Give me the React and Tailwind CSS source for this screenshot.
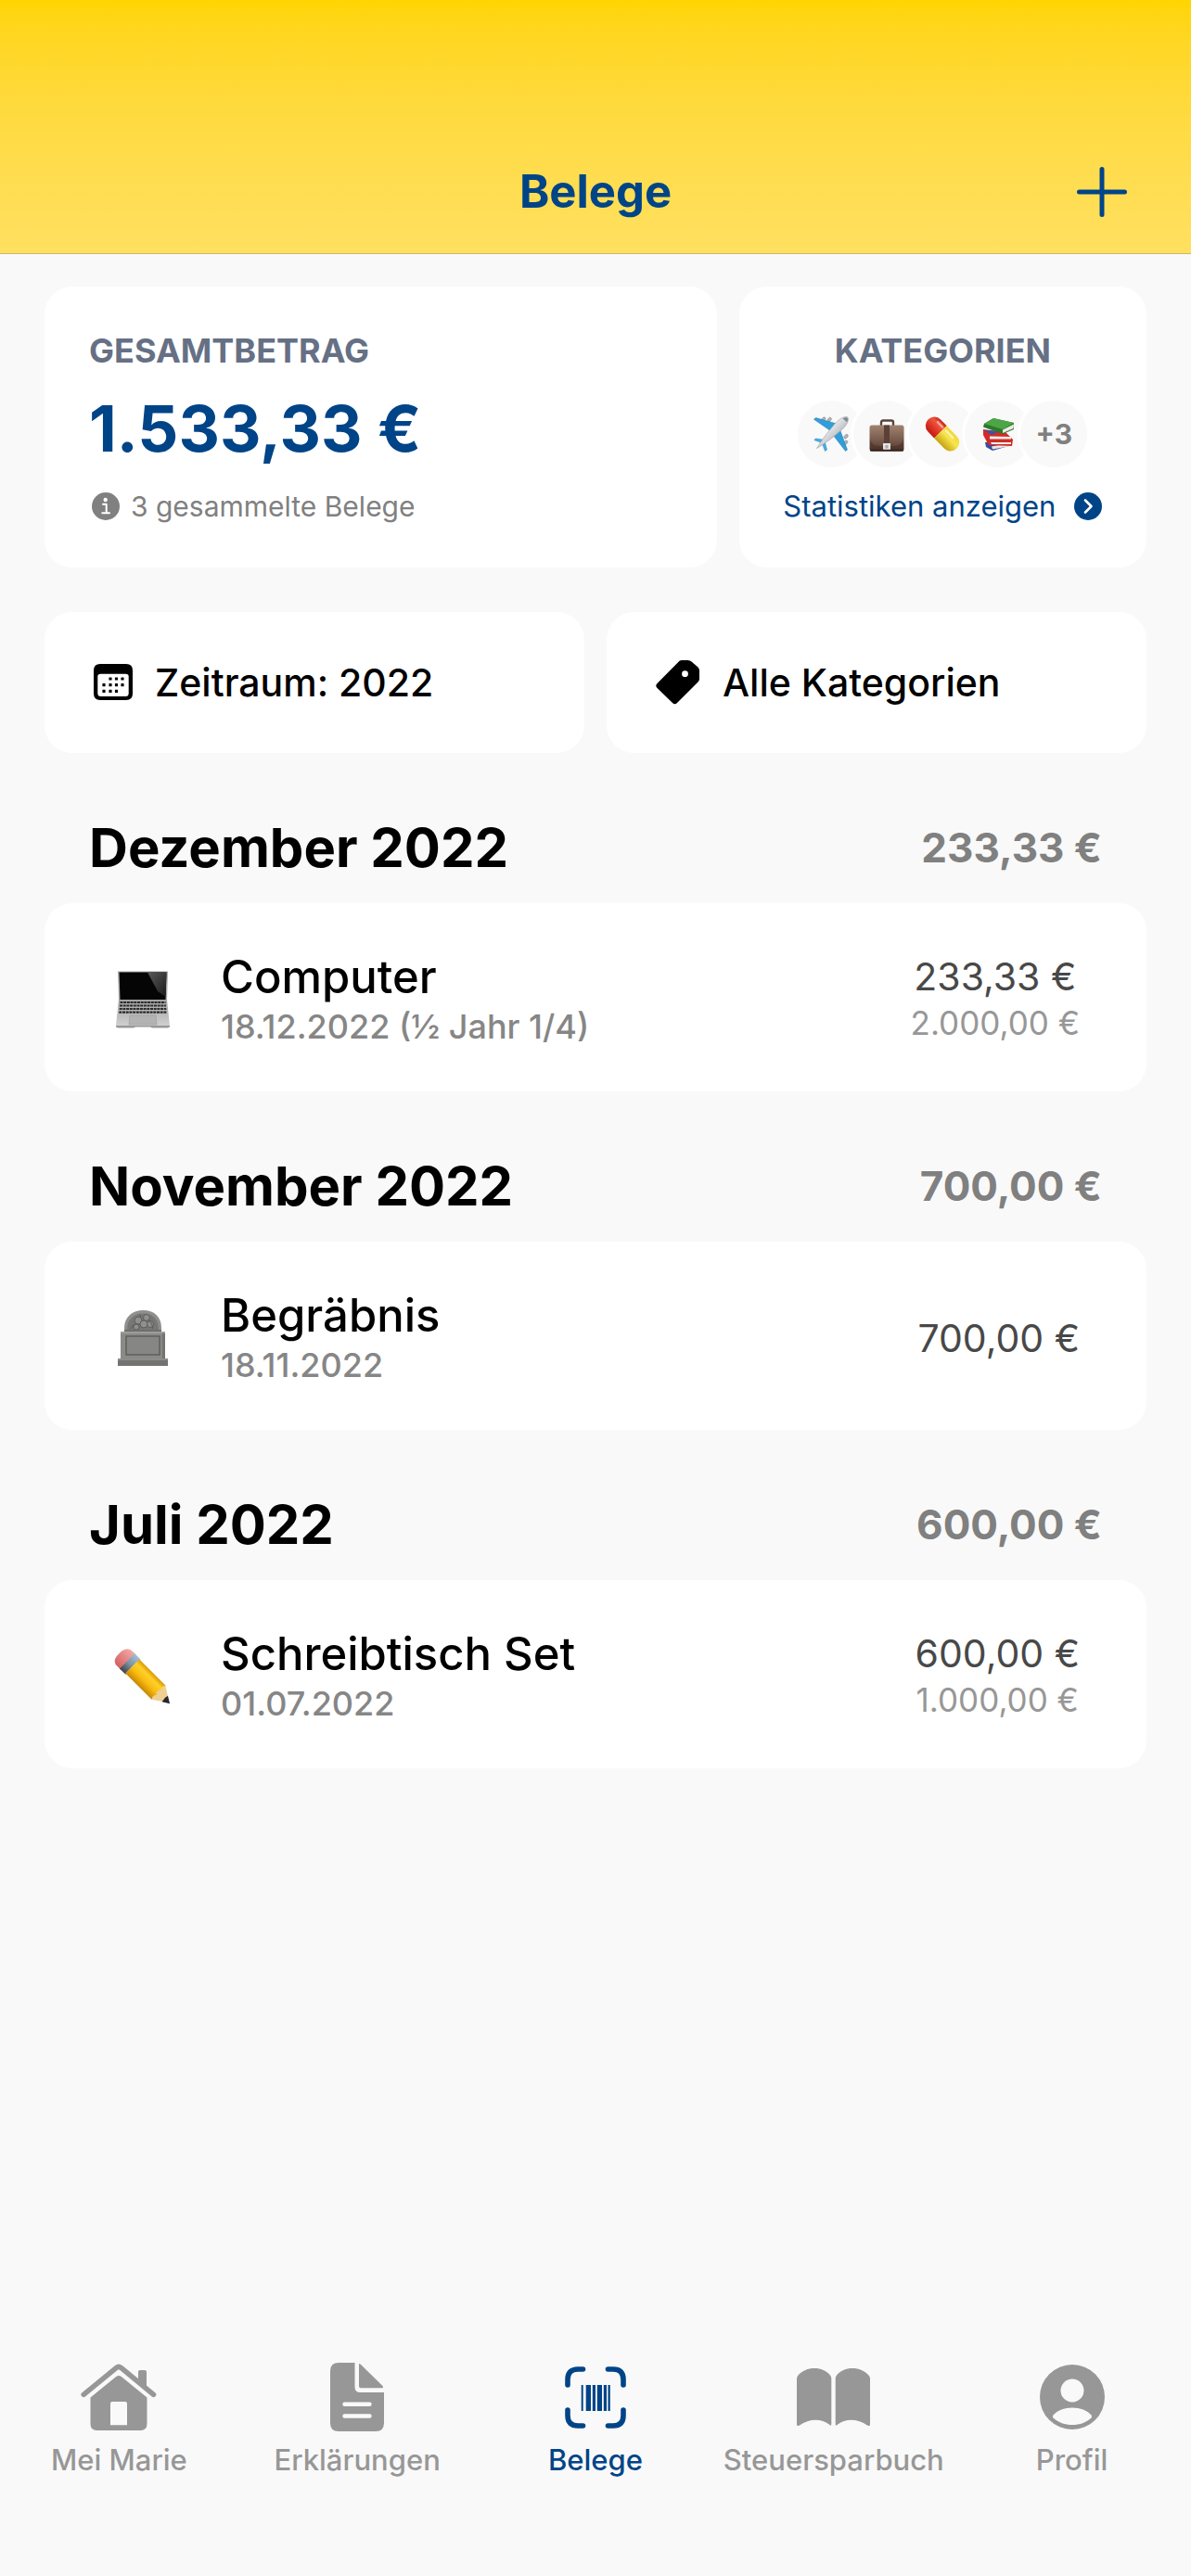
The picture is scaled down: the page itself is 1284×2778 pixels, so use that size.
import React from "react";

/* ---------- emoji style drawings ---------- */

function Plane({ className }) {
  return (
    <svg viewBox="0 0 38 38" className={className} aria-hidden="true">
      <defs>
        <linearGradient id="plane-body" x1="0" y1="0" x2="1" y2="1">
          <stop offset="0.3" stopColor="#f4f4f6" />
          <stop offset="0.75" stopColor="#a9adb4" />
        </linearGradient>
      </defs>
      <g fill="#b4b8bd" stroke="#777" strokeWidth="0.6">
        <rect x="9.500" y="0.800" width="3" height="5" rx="1.500" transform="rotate(40 11 3)" />
        <rect x="16" y="0.800" width="3" height="5" rx="1.500" transform="rotate(40 17 3)" />
        <rect x="34" y="19" width="3" height="5" rx="1.500" transform="rotate(40 35 21)" />
        <rect x="33.500" y="26" width="3" height="5" rx="1.500" transform="rotate(40 35 28)" />
      </g>
      <path d="M0.500 3.200 2.500 1.500 25 8 19 16ZM28 13 36.500 36 34.500 37.500 21 20Z" fill="#2f9fdc" stroke="#2277ad" strokeWidth="0.500" />
      <path d="M0.800 25.500 2.500 24 12 25.500 9 28.500ZM12 26.500 14.500 36 12.500 37.500 9.500 29.500Z" fill="#3fb2ea" stroke="#2277ad" strokeWidth="0.500" />
      <path d="M3.500 34.500C8 27 18 13 25.500 5.500 29.500 1.500 34.500-.5 37 1c1.500 2.500-.5 7.500-4.500 11.500C25 20 11 30.500 3.500 34.500Z" fill="url(#plane-body)" stroke="#8d9198" strokeWidth="0.500" />
      <path d="M31.500 2.200c2-1 4-1.200 5-.5.8 1 .5 2.700-.5 4.600Z" fill="#7f8791" />
    </svg>
  );
}

function Briefcase({ className }) {
  return (
    <svg viewBox="0 0 38 38" className={className} aria-hidden="true">
      <defs>
        <linearGradient id="case-body" x1="0" y1="0" x2="0" y2="1">
          <stop offset="0" stopColor="#a08270" />
          <stop offset="0.6" stopColor="#76594a" />
          <stop offset="1" stopColor="#4d352b" />
        </linearGradient>
      </defs>
      <path d="M13 10V6.500Q13 4.500 15 4.500H24Q26 4.500 26 6.500V10" fill="none" stroke="#5a443a" strokeWidth="2.400" />
      <rect x="0.500" y="9.500" width="37" height="28" rx="2.500" fill="url(#case-body)" />
      <path d="M1 24Q2 31 10 32H28Q36 31 37 24V35Q37 37.500 34.500 37.500H3Q1 37.500 1 35Z" fill="#4a3127" opacity="0.600" />
      <rect x="16" y="9.500" width="6" height="20" fill="#5b4135" />
      <path d="M15 29H23V35Q23 37 21 37H17Q15 37 15 35Z" fill="#e4e4e6" />
      <rect x="17.500" y="31" width="3" height="3.500" fill="#a9a9ad" />
      <rect x="1" y="35.800" width="36" height="1.700" fill="#33221a" />
    </svg>
  );
}

function Pill({ className }) {
  return (
    <svg viewBox="0 0 38 38" className={className} aria-hidden="true">
      <defs>
        <linearGradient id="pill-red" x1="0" y1="0" x2="0" y2="1">
          <stop offset="0" stopColor="#c92a1c" />
          <stop offset="0.300" stopColor="#f0543c" />
          <stop offset="1" stopColor="#c5160f" />
        </linearGradient>
        <linearGradient id="pill-yellow" x1="0" y1="0" x2="0" y2="1">
          <stop offset="0" stopColor="#f0d83c" />
          <stop offset="0.400" stopColor="#f7e64e" />
          <stop offset="1" stopColor="#c6a20f" />
        </linearGradient>
      </defs>
      <g transform="rotate(46 19 19)">
        <path d="M19 9.500H9.500A9.500 9.500 0 0 0 9.500 28.500H19Z" fill="url(#pill-red)" transform="translate(-3 0)" />
        <path d="M16 9.500H31.500A9.500 9.500 0 0 1 31.500 28.500H16Z" fill="url(#pill-yellow)" />
        <rect x="5" y="12.500" width="10" height="2.500" rx="1.200" fill="#fff" opacity="0.500" />
        <rect x="18" y="12.500" width="13" height="2.500" rx="1.200" fill="#fff" opacity="0.550" />
      </g>
    </svg>
  );
}

function Books({ className }) {
  return (
    <svg viewBox="0 0 38 38" className={className} aria-hidden="true">
      <path d="M5 28 25 25 34 31 13 37 6 33Z" fill="#3a4ba0" />
      <path d="M12 32.500 33 28.500 33 32 13 35.500Z" fill="#e9e6df" />
      <path d="M3 14 27 17 35 25 34 32 9 31 5 24 3 20Z" fill="#d22b26" />
      <path d="M4 15 20 16 12 20Z" fill="#3d52a8" />
      <path d="M10 21.500 33 22 33 24.500 10 24.500Z" fill="#f1eee8" />
      <path d="M11 28 33 28 33 30 12 30Z" fill="#f1eee8" />
      <path d="M4 8 14 2 36 7 36 14 24 19 3 11.500Z" fill="#2b7a2d" />
      <path d="M4 8 14 2 36 7 24 14Z" fill="#4da545" />
      <path d="M24 14.500 36 8.500 35.500 13 24 18Z" fill="#edebe4" />
    </svg>
  );
}

function Laptop({ className }) {
  return (
    <svg viewBox="0 0 60 62" className={className} aria-hidden="true">
      <defs>
        <linearGradient id="glare" x1="0" y1="0" x2="1" y2="1">
          <stop offset="0" stopColor="#5a5a5a" />
          <stop offset="1" stopColor="#1a1a1a" />
        </linearGradient>
        <linearGradient id="base" x1="0" y1="0" x2="0" y2="1">
          <stop offset="0" stopColor="#a2a2a2" />
          <stop offset="1" stopColor="#cfcfcf" />
        </linearGradient>
      </defs>
      <path d="M3 0.500H57L56 32H4Z" fill="#a9a9a9" />
      <path d="M4.500 1.500H55.500L54.500 31H5.500Z" fill="#050505" />
      <path d="M35 1.500H55.500L54.500 28 46 22Z" fill="url(#glare)" />
      <path d="M4 31H56L59 59H1Z" fill="url(#base)" />
      <g stroke="#2a2a2a" strokeWidth="2.200" strokeDasharray="3 0.700">
        <path d="M5.500 34H54.500M5 37.500H55M4.700 41H55.300M4.300 44.600H55.700" />
      </g>
      <path d="M16 48H44L45 58H15Z" fill="#b3b3b3" stroke="#9c9c9c" strokeWidth="0.600" />
      <path d="M1 59H59V60.500L57 61.500H40L38 60.500H22L20 61.500H3L1 60.500Z" fill="#989898" />
    </svg>
  );
}

function Gravestone({ className }) {
  return (
    <svg viewBox="0 0 60 62" className={className} aria-hidden="true">
      <path d="M10 24V20C10 8 19 1 30.500 1S50 8 50 20V24Z" fill="#8f8f8d" />
      <path d="M13 22C13 11 20 4.500 30.500 4.500S47 11 47 22Z" fill="#777775" />
      <g fill="#90908e" stroke="#5d5d5b" strokeWidth="1">
        <circle cx="25" cy="12" r="4" />
        <circle cx="34" cy="9" r="3.500" />
        <circle cx="31" cy="16" r="4" />
        <circle cx="23" cy="19" r="3" />
        <circle cx="38" cy="16" r="3.500" />
        <path d="M17 21Q19 16 23 16M41 21Q39 12 35 11M28 8 26 5" fill="none" />
      </g>
      <path d="M10 22H50V25H10Z" fill="#6f6f6d" />
      <path d="M6 24H54V54H6Z" fill="#8a8a88" />
      <path d="M6 24H54V26H6Z" fill="#9d9d9b" />
      <path d="M51 26H54V54H51Z" fill="#747472" />
      <rect x="12" y="29" width="36" height="20" fill="#868684" stroke="#5c5c5a" strokeWidth="1.400" />
      <path d="M3 53H57V61H3Z" fill="#737371" />
      <path d="M3 53H57V55H3Z" fill="#8c8c8a" />
    </svg>
  );
}

function Pencil({ className }) {
  return (
    <svg viewBox="0 0 60 62" className={className} aria-hidden="true">
      <defs>
        <linearGradient id="pencil-body" x1="0" y1="0" x2="0" y2="1">
          <stop offset="0" stopColor="#d99a05" />
          <stop offset="0.250" stopColor="#ffd028" />
          <stop offset="0.600" stopColor="#f8bc10" />
          <stop offset="1" stopColor="#c98604" />
        </linearGradient>
        <linearGradient id="ferrule" x1="0" y1="0" x2="0" y2="1">
          <stop offset="0" stopColor="#9fc0da" />
          <stop offset="0.500" stopColor="#7e94a5" />
          <stop offset="1" stopColor="#3e4347" />
        </linearGradient>
        <linearGradient id="eraser" x1="0" y1="0" x2="0" y2="1">
          <stop offset="0" stopColor="#f0aaa8" />
          <stop offset="1" stopColor="#d5605f" />
        </linearGradient>
      </defs>
      <g transform="translate(5 5.500) rotate(45)">
        <path d="M14-10H9Q0-10 0 2T9 13H14Z" fill="url(#eraser)" transform="translate(0 -1)" />
        <path d="M12-11H21V12H12Z" fill="url(#ferrule)" />
        <path d="M20-10H60L76 0.500 60 11H20Z" fill="#efcf94" />
        <path d="M20-10H60Q57-6.500 60-3 56 0.500 60 4 57 7.500 60 11H20Z" fill="url(#pencil-body)" />
        <path d="M69.500-4 77 0.500 69.500 5Q68 0.500 69.500-4Z" fill="#26262c" />
      </g>
    </svg>
  );
}

/* ---------- interface icons ---------- */

function InfoIcon() {
  return (
    <svg viewBox="0 0 30 30" className="size-[30px] shrink-0" aria-hidden="true">
      <circle cx="15" cy="15" r="15" fill="#808080" />
      <circle cx="14.700" cy="8" r="2.200" fill="#fff" />
      <path d="M12 12.800H15.700V22M11.300 22.300H19" fill="none" stroke="#fff" strokeWidth="2" strokeLinecap="round" strokeLinejoin="round" />
    </svg>
  );
}

function ChevronIcon() {
  return (
    <svg viewBox="0 0 30 30" className="size-[30px] shrink-0" aria-hidden="true">
      <circle cx="15" cy="15" r="15" fill="#004488" />
      <path d="M12 8.500 18.500 15 12 21.500" fill="none" stroke="#fff" strokeWidth="2.600" strokeLinecap="round" strokeLinejoin="round" />
    </svg>
  );
}

const calendarDots = [
  [18, 16], [24.500, 16], [31, 16],
  [11, 22.700], [18, 22.700], [24.500, 22.700], [31, 22.700],
  [11, 29.400], [18, 29.400], [24.500, 29.400],
];

function CalendarIcon() {
  return (
    <svg viewBox="0 0 42 40" className="h-10 w-[42px]" aria-hidden="true">
      <path fillRule="evenodd" d="M7 0H35Q42 0 42 7V32Q42 39 35 39H7Q0 39 0 32V7Q0 0 7 0ZM7.500 10.700Q4.300 10.700 4.300 13.500V31.500Q4.300 35 7.500 35H34.500Q37.700 35 37.700 31.500V13.500Q37.700 10.700 34.500 10.700Z" />
      {calendarDots.map(([x, y]) => (
        <rect key={`${x}-${y}`} x={x - 1.6} y={y - 1.6} width="3.200" height="3.200" rx="0.600" />
      ))}
    </svg>
  );
}

function TagIcon() {
  return (
    <svg viewBox="0 0 48 48" className="size-12" aria-hidden="true">
      <path fillRule="evenodd" d="M25.500.8Q26.500 0 28 0H34.500Q37 0 38.500 1.500L45.500 7.500Q47 9 47 11V20Q47 22 45.500 23.500L23 46Q20.500 48.500 18 46L1.500 30Q-1 27.500 1.500 25ZM31.500 11.300A3.400 3.400 0 1 0 31.500 18.100 3.400 3.400 0 1 0 31.500 11.300Z" />
    </svg>
  );
}

function HomeIcon() {
  return (
    <svg viewBox="0 0 82 72" className="h-[72px] w-[82px]" fill="currentColor" aria-hidden="true">
      <path d="M3.200 33.300 38.500 4.400Q41 2.500 43.500 4.400L78.500 33.300" fill="none" stroke="currentColor" strokeWidth="5.600" strokeLinecap="round" />
      <path d="M62 9Q62 7 64 7H69Q71 7 71 9V27L62 19Z" />
      <path fillRule="evenodd" d="M10.500 36.500 38.500 13.800Q41 12 43.500 13.800L71.500 36.500V65Q71.500 72 64.500 72H17.500Q10.500 72 10.500 65ZM34 41Q32 41 32 43V66.300H50V43Q50 41 48 41Z" />
    </svg>
  );
}

function FileIcon() {
  return (
    <svg viewBox="0 0 58 74" className="h-[74px] w-[58px]" fill="currentColor" aria-hidden="true">
      <path fillRule="evenodd" d="M9 0H26.500V26Q26.500 32 32.500 32H58V65Q58 74 49 74H9Q0 74 0 65V9Q0 0 9 0ZM15.500 42.500A2.200 2.200 0 0 0 15.500 46.900H42.500A2.200 2.200 0 0 0 42.500 42.500ZM15.500 55.300A2.200 2.200 0 0 0 15.500 59.700H42.500A2.200 2.200 0 0 0 42.500 55.300Z" />
      <path d="M31 2Q31 .2 32.500 1.500L56.500 25Q58 27.300 55.500 27.300H33Q31 27.300 31 25.300Z" />
    </svg>
  );
}

function ScanIcon() {
  return (
    <svg viewBox="0 0 66 67" className="h-[67px] w-[66px]" fill="currentColor" aria-hidden="true">
      <path d="M3 20V14Q3 3 14 3H19.500M46.500 3H52Q63 3 63 14V20M63 47V53Q63 64 52 64H46.500M19.500 64H14Q3 64 3 53V47" fill="none" stroke="currentColor" strokeWidth="5.600" strokeLinecap="round" />
      <path d="M17.700 20H19.700V48H17.700ZM22.700 20H28V48H22.700ZM29.800 20H33V48H29.800ZM34.800 20H40V48H34.800ZM41.800 20H45V48H41.800ZM46.500 20H48.800V48H46.500Z" />
    </svg>
  );
}

function BookIcon() {
  return (
    <svg viewBox="0 0 79 62" className="h-[62px] w-[79px]" fill="currentColor" aria-hidden="true">
      <path d="M0 11Q0 9 1.500 7.500C6 2.500 12 0 19 0S32 2.500 36 7.500Q37.300 9 37.300 11V60Q37.300 63 34.800 60.500C27 54 13 54 3 61.500Q0 63.500 0 60Z" />
      <path d="M79 11Q79 9 77.500 7.500C73 2.500 67 0 60 0S47 2.500 43 7.500Q41.700 9 41.700 11V60Q41.700 63 44.200 60.500C52 54 66 54 76 61.500Q79 63.500 79 60Z" />
    </svg>
  );
}

function ProfileIcon() {
  return (
    <svg viewBox="0 0 70 70" className="size-[70px]" aria-hidden="true">
      <circle cx="35" cy="35" r="35" fill="currentColor" />
      <circle cx="35" cy="28" r="12.500" fill="#f9f9f9" />
      <path d="M14.500 57.500Q13.200 56 14.500 54.500C19 49.500 26.500 46.600 35 46.600S51 49.500 55.500 54.500Q56.800 56 55.500 57.500C50 62.500 43 65 35 65S20 62.500 14.500 57.500Z" fill="#f9f9f9" />
    </svg>
  );
}

/* ---------- data ---------- */

const categories = [
  { name: "Reisen", Icon: Plane },
  { name: "Arbeit", Icon: Briefcase },
  { name: "Gesundheit", Icon: Pill },
  { name: "Bildung", Icon: Books },
];

const months = [
  { month: "Dezember 2022", total: "233,33 €", title: "Computer", date: "18.12.2022 (½ Jahr 1/4)", amount: "233,33 €", full: "2.000,00 €", Icon: Laptop },
  { month: "November 2022", total: "700,00 €", title: "Begräbnis", date: "18.11.2022", amount: "700,00 €", Icon: Gravestone },
  { month: "Juli 2022", total: "600,00 €", title: "Schreibtisch Set", date: "01.07.2022", amount: "600,00 €", full: "1.000,00 €", Icon: Pencil },
];

const tabs = [
  { label: "Mei Marie", Icon: HomeIcon },
  { label: "Erklärungen", Icon: FileIcon },
  { label: "Belege", Icon: ScanIcon, active: true },
  { label: "Steuersparbuch", Icon: BookIcon },
  { label: "Profil", Icon: ProfileIcon },
];

/* ---------- sections ---------- */

function Header() {
  return (
    <header className="grid grid-cols-[1fr_auto_1fr] items-center border-b border-[#c9b76c] bg-linear-to-b from-[#ffd500] to-[#ffe060] px-[60px] pt-[141px] text-[#004488]">
      <h1 className="col-start-2 text-[49px] leading-[132px] font-bold">Belege</h1>
      <button type="button" aria-label="Beleg hinzufügen" className="flex size-[72px] items-center justify-center justify-self-end">
        <svg viewBox="0 0 54 54" className="size-[54px]" aria-hidden="true">
          <path d="M27 2.500V51.500M2.500 27H51.500" stroke="currentColor" strokeWidth="5" strokeLinecap="round" />
        </svg>
      </button>
    </header>
  );
}

function Summary() {
  return (
    <div className="grid grid-cols-[33fr_20fr] gap-6">
      <section className="rounded-[30px] bg-white px-12 py-[42px]">
        <h2 className="text-[36px] leading-[54px] font-bold text-[#667085]">GESAMTBETRAG</h2>
        <p className="mt-3 text-[69px] leading-[90px] font-bold text-[#004488]">1.533,33 €</p>
        <p className="mt-[15px] flex items-center gap-3 pl-[3px] text-[30px] leading-[48px] text-[#808080]">
          <InfoIcon />
          3 gesammelte Belege
        </p>
      </section>
      <section className="flex flex-col items-center rounded-[30px] bg-white py-[42px]">
        <h2 className="text-[36px] leading-[54px] font-bold text-[#667085]">KATEGORIEN</h2>
        <ul className="mt-6 flex -space-x-[18px]">
          {categories.map(({ name, Icon }) => (
            <li key={name} aria-label={name} className="flex size-[78px] items-center justify-center rounded-full border-3 border-white bg-[#f9f9f9]">
              <Icon className="size-[38px]" />
            </li>
          ))}
          <li className="flex size-[78px] items-center justify-center rounded-full border-3 border-white bg-[#f9f9f9] text-[30px] font-bold text-[#808080]">+3</li>
        </ul>
        <a href="#statistiken" className="mt-[15px] flex items-center gap-5 text-[31px] leading-[48px] whitespace-nowrap text-[#004488]">
          Statistiken anzeigen
          <ChevronIcon />
        </a>
      </section>
    </div>
  );
}

function Filters() {
  return (
    <div className="mt-12 grid grid-cols-2 gap-6 text-[41px] leading-[56px] font-medium text-black">
      <button type="button" className="flex items-center gap-6 rounded-[30px] bg-white py-12 pl-[53px]">
        <CalendarIcon />
        Zeitraum: 2022
      </button>
      <button type="button" className="flex items-center gap-6 rounded-[30px] bg-white py-12 pl-[53px]">
        <TagIcon />
        Alle Kategorien
      </button>
    </div>
  );
}

function Month({ month, total, title, date, amount, full, Icon }) {
  return (
    <section>
      <div className="flex items-center justify-between px-12 pt-[66px] pb-6 leading-[72px]">
        <h2 className="text-[58px] font-bold text-black">{month}</h2>
        <p className="text-[44px] font-bold text-[#808080]">{total}</p>
      </div>
      <article className="flex items-center rounded-[30px] bg-white px-[72px] pt-[50px] pb-[46px]">
        <Icon className="h-[62px] w-[68px] shrink-0" />
        <div className="ml-[50px] grow">
          <h3 className="text-[49px] leading-[60px] font-medium text-black">{title}</h3>
          <p className="text-[36px] leading-[47px] font-medium text-[#868686]">{date}</p>
        </div>
        <div className="text-center leading-[50px]">
          <p className="text-[41px] text-[#484848]">{amount}</p>
          {full && <p className="text-[35px] text-[#979797]">{full}</p>}
        </div>
      </article>
    </section>
  );
}

function TabBar() {
  return (
    <nav className="mt-auto grid grid-cols-5 pt-12 pb-[105px]">
      {tabs.map(({ label, Icon, active }) => (
        <a
          key={label}
          href={`#${label}`}
          aria-current={active ? "page" : undefined}
          className={`flex flex-col items-center gap-2 text-[31px] leading-[40px] font-medium ${active ? "text-[#004488]" : "text-[#979797]"}`}
        >
          <span className="flex h-20 items-center justify-center">
            <Icon />
          </span>
          {label}
        </a>
      ))}
    </nav>
  );
}

export default function App() {
  return (
    <div className="flex min-h-screen flex-col bg-[#f9f9f9] font-['Inter',sans-serif]">
      <Header />
      <main className="px-12 pt-[35px]">
        <Summary />
        <Filters />
        {months.map((entry) => (
          <Month key={entry.month} {...entry} />
        ))}
      </main>
      <TabBar />
    </div>
  );
}
